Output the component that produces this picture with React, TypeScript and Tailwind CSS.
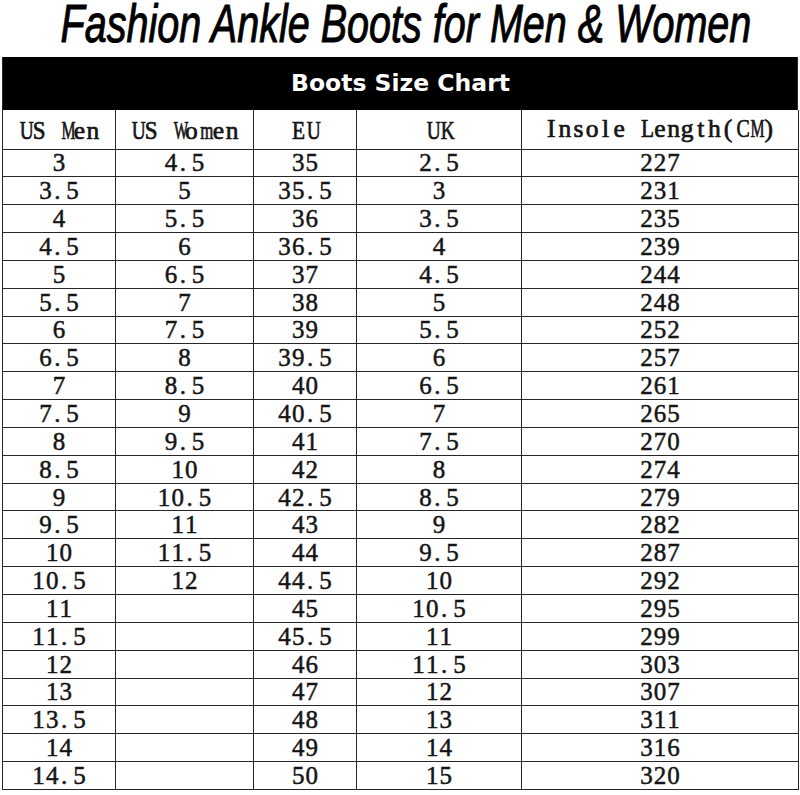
import React from "react";

const men = ["3","3.5","4","4.5","5","5.5","6","6.5","7","7.5","8","8.5","9","9.5","10","10.5","11","11.5","12","13","13.5","14","14.5"];
const women = ["4.5","5","5.5","6","6.5","7","7.5","8","8.5","9","9.5","10","10.5","11","11.5","12"];
const eu = ["35","35.5","36","36.5","37","38","39","39.5","40","40.5","41","42","42.5","43","44","44.5","45","45.5","46","47","48","49","50"];
const uk = ["2.5","3","3.5","4","4.5","5","5.5","6","6.5","7","7.5","8","8.5","9","9.5","10","10.5","11","11.5","12","13","14","15"];
const insole = ["227","231","235","239","244","248","252","257","261","265","270","274","279","282","287","292","295","299","303","307","311","316","320"];

const cell = "border border-[#262626] text-center align-middle p-0 leading-none";

const base = "inline-block w-[13.6px] text-center";
const glyphClass: Record<string, string> = {
  ".": "inline-block w-[13.6px] text-left pl-[2px]",
  M: base + " scale-x-[0.62]",
  W: base + " scale-x-[0.6]",
  m: base + " scale-x-[0.66]",
  U: base + " scale-x-[0.76]",
  K: base + " scale-x-[0.76]",
  C: base + " scale-x-[0.78]",
  S: base + " scale-x-[0.9]",
  E: base + " scale-x-[0.84]",
  L: base + " scale-x-[0.84]",
};

function Mono({ v }: { v: string }) {
  return (
    <span className="inline-flex justify-center whitespace-pre">
      {v.split("").map((c, i) => (
        <span key={i} className={glyphClass[c] ?? base}>
          {c}
        </span>
      ))}
    </span>
  );
}

export default function App() {
  return (
    <div className="w-[800px] h-[795px] bg-white overflow-hidden">
      <div className="h-[57px] flex justify-center">
        <h1
          className="shrink-0 whitespace-nowrap italic text-black text-[53px] leading-[57px] ml-[12px] mt-[-5px] scale-x-[0.746] [-webkit-text-stroke:1px_#000]"
          style={{ fontFamily: '"Liberation Sans", Arial, sans-serif' }}
        >
          Fashion Ankle Boots for Men &amp; Women
        </h1>
      </div>
      <div className="px-[2px]">
        <div className="h-[53px] bg-black flex items-center justify-center border-x border-[#262626]">
          <span
            className="text-white font-bold text-[23.5px] leading-none pl-[1px] pt-[1px]"
            style={{ fontFamily: '"DejaVu Sans", Verdana, sans-serif' }}
          >
            Boots Size Chart
          </span>
        </div>
        <table
          className="w-[796px] border-collapse table-fixed text-[#151515]"
          style={{ fontFamily: '"Liberation Serif", "Times New Roman", serif' }}
        >
          <colgroup>
            <col className="w-[113px]" />
            <col className="w-[138px]" />
            <col className="w-[103px]" />
            <col className="w-[165px]" />
            <col className="w-[277px]" />
          </colgroup>
          <thead className="text-[25.5px] [-webkit-text-stroke:0.7px_#151515]">
            <tr className="h-[39px]">
              <td className={cell + " border-t-0 pt-[3px]"}><Mono v="US Men" /></td>
              <td className={cell + " border-t-0 pt-[3px]"}><Mono v="US Women" /></td>
              <td className={cell + " border-t-0 pt-[3px]"}><Mono v="EU" /></td>
              <td className={cell + " border-t-0 pt-[3px]"}><Mono v="UK" /></td>
              <td className={cell + " border-t-0 pb-[2px]"}><Mono v="Insole Length(CM)" /></td>
            </tr>
          </thead>
          <tbody className="text-[25px] [-webkit-text-stroke:0.5px_#151515]">
            {men.map((m, i) => (
              <tr key={i} className="h-[27.85px]">
                <td className={cell}><Mono v={m} /></td>
                <td className={cell}>{women[i] ? <Mono v={women[i]} /> : null}</td>
                <td className={cell}><Mono v={eu[i]} /></td>
                <td className={cell}><Mono v={uk[i]} /></td>
                <td className={cell}><Mono v={insole[i]} /></td>
              </tr>
            ))}
          </tbody>
        </table>
      </div>
    </div>
  );
}
